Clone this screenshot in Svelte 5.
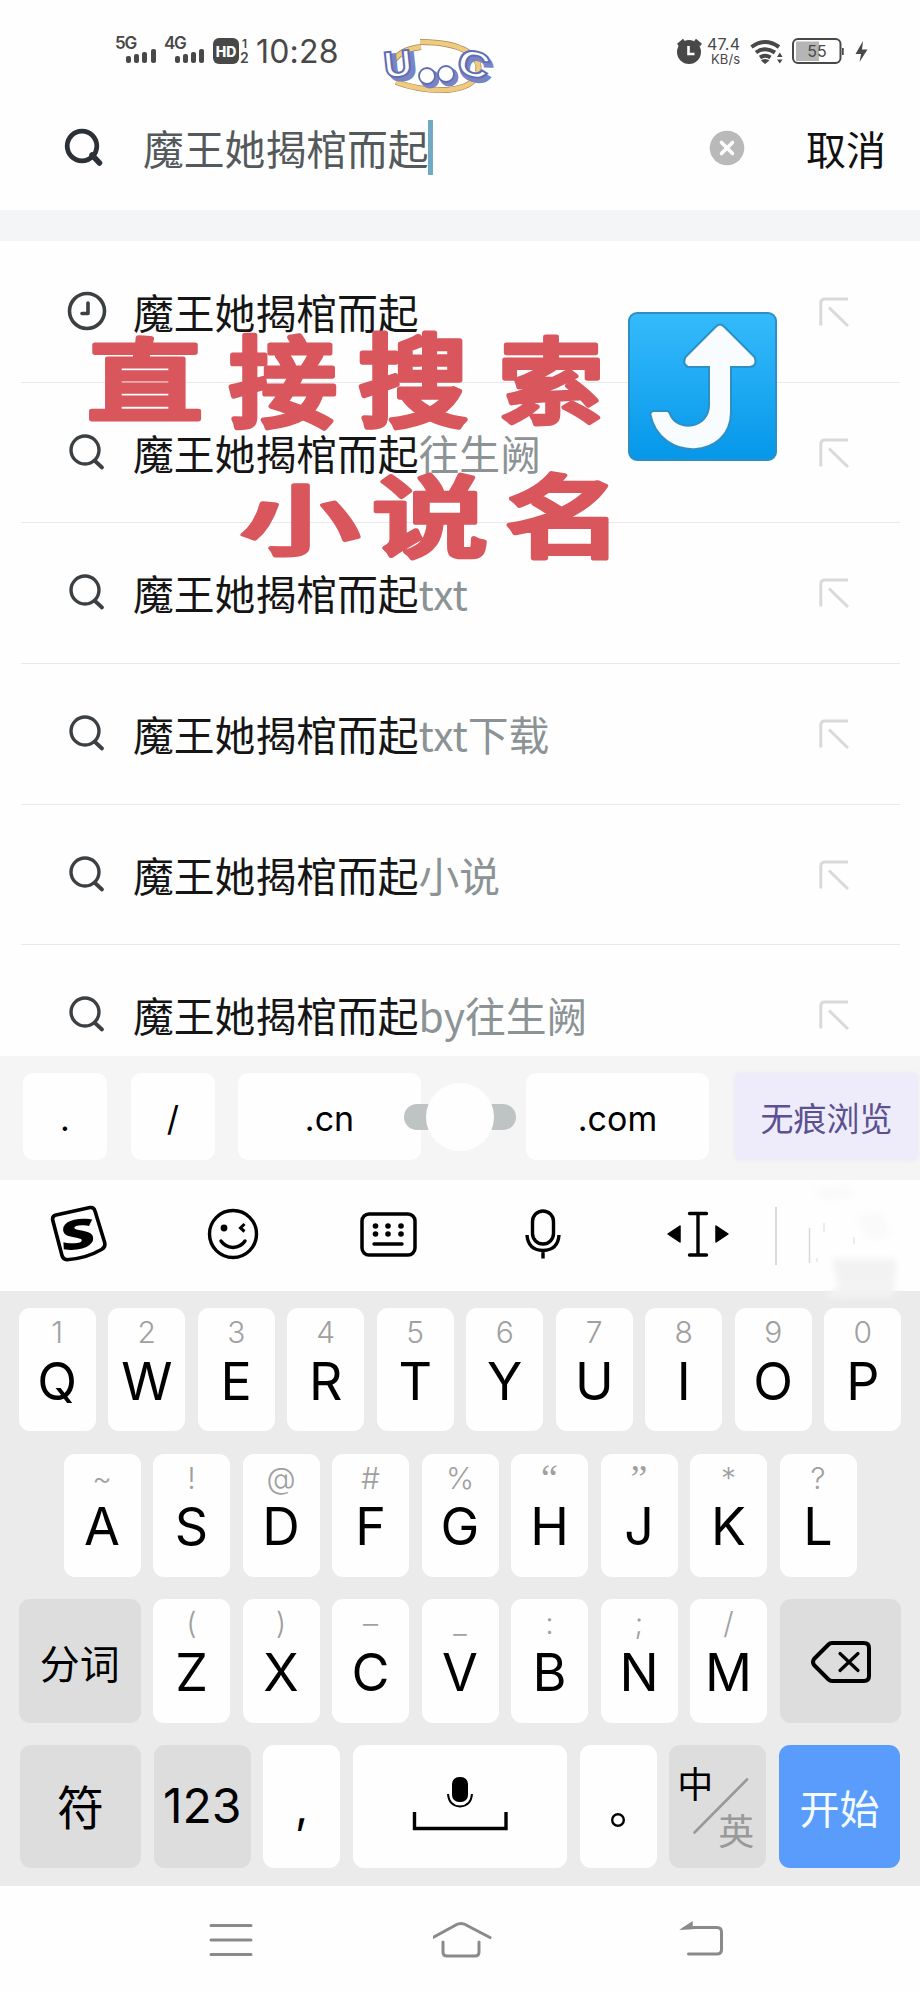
<!-- App.svelte - Browser search page with suggestions and the on-screen keyboard -->

<script lang="ts">
  type Key = { label: string; hint: string };

  const query = '魔王她揭棺而起';

  const suggestions = [
    { rest: '', recent: true },
    { rest: '往生阙', recent: false },
    { rest: 'txt', recent: false },
    { rest: 'txt下载', recent: false },
    { rest: '小说', recent: false },
    { rest: 'by往生阙', recent: false }
  ];

  function makeRow(letters: string, hints: string): Key[] {
    return letters.split('').map((label, i) => ({ label, hint: hints[i] }));
  }

  const topRow = makeRow('QWERTYUIOP', '1234567890');
  const midRow = makeRow('ASDFGHJKL', '~!@#%“”*?');
  const lowRow = makeRow('ZXCVBNM', '()–_:;/');

  // handwritten note: x/y is the glyph centre
  const note = [
    { ch: '直', x: 145, y: 380, sx: 1.22, sy: 0.95 },
    { ch: '接', x: 283, y: 382, sx: 1.14, sy: 1.04 },
    { ch: '搜', x: 413, y: 381, sx: 1.16, sy: 1.06 },
    { ch: '索', x: 551, y: 381, sx: 1.1, sy: 0.98 },
    { ch: '小', x: 300, y: 520, sx: 1.26, sy: 0.8 },
    { ch: '说', x: 430, y: 517, sx: 1.22, sy: 0.93 },
    { ch: '名', x: 564, y: 516, sx: 1.24, sy: 0.94 }
  ];
</script>

{#snippet letterKey(key: Key)}
  <button class="key">
    <span class="hint" class:quote={key.hint === '“' || key.hint === '”'}>{key.hint}</span>
    <span class="letter">{key.label}</span>
  </button>
{/snippet}

<div class="screen">
  <header>
    <div class="status">
      <svg class="signal" width="136" height="40" viewBox="114 32 136 40">
        <g fill="#484848">
          <text x="115" y="49" class="net">5G</text>
          <rect x="126" y="56" width="5" height="7" rx="2" />
          <rect x="134" y="54" width="5" height="9" rx="2" />
          <rect x="142" y="52" width="5" height="11" rx="2" />
          <rect x="151" y="49" width="5" height="14" rx="2" />
          <text x="164" y="49" class="net">4G</text>
          <rect x="175" y="56" width="5" height="7" rx="2" />
          <rect x="183" y="54" width="5" height="9" rx="2" />
          <rect x="191" y="52" width="5" height="11" rx="2" />
          <rect x="199" y="49" width="5" height="14" rx="2" />
          <rect x="213" y="38" width="26" height="26" rx="6" />
          <text x="226" y="57" class="hd">HD</text>
          <text x="242" y="48" class="sim">1</text>
          <text x="240" y="63" class="sim two">2</text>
        </g>
      </svg>
      <span class="clock">10:28</span>
      <svg class="logo" width="116" height="60" viewBox="380 36 116 60">
        <g fill="none" stroke="#a98360" stroke-width="6">
          <path d="M394 60 Q402 49 421 47" />
          <path d="M420 42 Q452 42 468 52 Q481 61 478 72" />
          <path d="M396 82 Q420 91 447 90 Q468 88 475 79" />
        </g>
        <g fill="none" stroke="#efcc7d" stroke-width="4.6">
          <path d="M394 60 Q402 49 421 47" />
          <path d="M420 42 Q452 42 468 52 Q481 61 478 72" />
          <path d="M396 82 Q420 91 447 90 Q468 88 475 79" />
        </g>
        <g class="logo-shade">
          <text transform="translate(389 81) rotate(-6) scale(1.12 1.06)">U</text>
          <text transform="translate(457 76) rotate(15) scale(1.28 1.04)">C</text>
          <circle cx="430" cy="79" r="8" />
          <circle cx="449" cy="77" r="8" />
        </g>
        <g class="logo-face">
          <text transform="translate(385 78) rotate(-6) scale(1.12 1.06)">U</text>
          <text transform="translate(455 72) rotate(15) scale(1.28 1.04)">C</text>
          <circle cx="427" cy="76" r="8" />
          <circle cx="446" cy="74" r="8" />
        </g>
      </svg>
      <svg class="sys" width="196" height="40" viewBox="674 32 196 40">
        <g fill="#484848">
          <circle cx="689" cy="52" r="12" />
          <path d="M678 45 l6-5 M701 45 l-6-5" stroke="#484848" stroke-width="3" />
          <path d="M688.500 46 v8 h6" fill="none" stroke="#fff" stroke-width="2.600" />
          <text x="707" y="50" class="speed" textLength="33">47.4</text>
          <text x="711" y="63.500" class="unit" textLength="29">KB/s</text>
          <g fill="none" stroke="#484848" stroke-width="4">
            <path d="M751.500 47 Q765 37 779 47" />
            <path d="M756 52.500 Q765 46 775 52.500" />
            <path d="M760 57.500 Q765 54 770.500 57.500" />
          </g>
          <path d="M761 60.500 Q765 57.500 769.500 60.500 L765 64z" />
          <path d="M777 57 l2.800-4.500 2.800 4.500z M777 59.500 l2.800 4 2.800-4z" />
          <rect x="796" y="41.500" width="23" height="19.500" fill="#b5b5b5" />
          <rect x="793" y="39" width="47.500" height="24" rx="5" fill="none" stroke="#484848" stroke-width="2" />
          <rect x="842" y="48" width="1.700" height="7" />
          <text x="817" y="57" class="battery">55</text>
          <path d="M863 41 L855.500 54 h5.500 L859.500 62 L867.500 49.500 h-5.500z" />
        </g>
      </svg>
    </div>

    <div class="search">
      <svg class="find" width="40" height="42" viewBox="64 127 40 42">
        <circle cx="82" cy="146" r="14.800" fill="none" stroke="#2b3136" stroke-width="4.800" />
        <path d="M92 155 L99.500 163" stroke="#2b3136" stroke-width="5.500" stroke-linecap="round" />
      </svg>
      <span class="query">{query}</span>
      <span class="caret"></span>
      <svg class="clear" width="36" height="36" viewBox="-18 -18 36 36">
        <circle r="17.300" fill="#b9b9b9" />
        <path d="M-5.500 -5.500 L5.500 5.500 M5.500 -5.500 L-5.500 5.500" stroke="#fff" stroke-width="3.600" stroke-linecap="round" />
      </svg>
      <span class="cancel">取消</span>
    </div>
  </header>

  <div class="strip"></div>

  <ul class="suggestions">
    {#each suggestions as item}
      <li>
        {#if item.recent}
          <svg class="lead" width="42" height="42" viewBox="-21 -20 42 42" fill="none" stroke="#3c4043">
            <circle cx="1" r="17.500" stroke-width="3.600" />
            <path d="M2 -8 V2.500 H-4" stroke-width="3.600" stroke-linecap="round" stroke-linejoin="round" />
          </svg>
        {:else}
          <svg class="lead" width="42" height="42" viewBox="-21 -20 42 42" fill="none" stroke="#3c4043">
            <circle cx="-1" cy="-2" r="14" stroke-width="3.400" />
            <path d="M8.500 8.500 L16 15.500" stroke-width="3.800" stroke-linecap="round" />
          </svg>
        {/if}
        <span class="text">{query}<em>{item.rest}</em></span>
        <svg class="fill" width="30" height="30" viewBox="0 0 30 30" fill="none" stroke="#d9d9d9" stroke-width="3">
          <path d="M1.800 28.500 V6 Q1.800 2 6 2 H29" />
          <path d="M10 10.500 L29 29" />
        </svg>
      </li>
    {/each}
  </ul>

  <div class="chips">
    <button class="chip small">.</button>
    <button class="chip small second">/</button>
    <button class="chip wide">.cn</button>
    <div class="slider"><i></i></div>
    <button class="chip wide">.com</button>
    <button class="chip wide private">无痕浏览</button>
  </div>

  <div class="toolbar">
    <div class="tool">
      <svg width="60" height="60" viewBox="47 1205 60 60">
        <path d="M55 1216 L89 1208.500 Q93 1208 94 1212 L103.500 1243 Q105 1248 100.500 1250.500 Q85 1259.500 66 1260.700 Q62 1260.500 61 1256.500 L51.700 1221 Q51 1217 55 1216z" fill="none" stroke="#000" stroke-width="3.600" />
        <text class="sogou" transform="translate(77.500 1250) rotate(-7) skewX(-4) scale(1.5 1.02)">S</text>
      </svg>
    </div>
    <div class="tool">
      <svg width="54" height="54" viewBox="-27 -27 54 54" fill="none" stroke="#000" stroke-width="3.400">
        <circle cy="0" r="23.500" />
        <circle cx="-9" cy="-6" r="3.400" fill="#000" stroke="none" />
        <path d="M11.500 -10 L7.500 -6 L11.500 -2.500" stroke-width="3" />
        <path d="M-12 7 Q-8 13 0 13.500 Q8 13 12 7" stroke-linecap="round" />
      </svg>
    </div>
    <div class="tool">
      <svg width="58" height="48" viewBox="-29 -24 58 48">
        <rect x="-26" y="-20" width="53" height="41" rx="7" fill="none" stroke="#000" stroke-width="3.500" />
        {#each [-12.5, 0, 13] as x}
          <circle cx={x} cy="-8" r="2.800" />
          <circle cx={x} cy="0" r="2.800" />
        {/each}
        <path d="M-14 10 H14" stroke="#000" stroke-width="3.400" stroke-linecap="round" />
      </svg>
    </div>
    <div class="tool">
      <svg width="38" height="54" viewBox="-19 -27 38 54" fill="none" stroke="#000" stroke-width="3.400">
        <rect x="-10.500" y="-23" width="21" height="33" rx="10.500" />
        <path d="M-16 1 Q-15 16 0 16.500 Q15 16 16 1 M0 16.500 V24.500" />
      </svg>
    </div>
    <div class="tool">
      <svg width="66" height="50" viewBox="-33 -25 66 50">
        <path d="M-8.500 -20.500 H8.500 M-8.500 21 H8.500 M0 -20.500 V21" stroke="#000" stroke-width="3.400" stroke-linecap="round" />
        <path d="M-30 0 L-18 -8 V8z M30 0 L18 -8 V8z" stroke="#000" stroke-width="1.500" stroke-linejoin="round" />
      </svg>
    </div>
    <div class="rule"></div>
    <svg class="smudge" width="130" height="122" viewBox="790 1180 130 122">
      <defs>
        <filter id="soft"><feGaussianBlur stdDeviation="3" /></filter>
      </defs>
      <g filter="url(#soft)">
        <path d="M832 1259 H896 V1276 L885 1286 L860 1278 L838 1284z" fill="#f2f2f2" />
        <path d="M848 1278 L895 1280 L893 1297 L824 1298z" fill="#f3f3f3" />
        <path d="M810 1190 L848 1185 L855 1196 L828 1202z" fill="#fafafa" />
        <path d="M855 1215 L882 1212 L892 1235 L868 1240z" fill="#fafafa" />
      </g>
      <path d="M809.500 1228 V1263" stroke="#d8d8d8" stroke-width="1.500" />
      <path d="M824 1223 V1232 M854 1237 V1244 M817 1258 V1262" stroke="#e6e6e6" stroke-width="1.500" />
    </svg>
  </div>

  <div class="keyboard">
    <div class="keys">
      {#each topRow as key}{@render letterKey(key)}{/each}
    </div>
    <div class="keys">
      {#each midRow as key}{@render letterKey(key)}{/each}
    </div>
    <div class="keys">
      <button class="key gray side split">分词</button>
      {#each lowRow as key}{@render letterKey(key)}{/each}
      <button class="key gray side">
        <svg width="64" height="46" viewBox="-33 -24 64 46" fill="none" stroke="#000" stroke-linecap="round" stroke-linejoin="round">
          <path d="M-9 -19 H23 Q28 -19 28 -14 V14 Q28 19 23 19 H-9 Q-11 19 -12.500 17.500 L-27 3 Q-29 0 -27 -3 L-12.500 -17.500 Q-11 -19 -9 -19z" stroke-width="4" />
          <path d="M-1 -8.500 L17 8.500 M17 -8.500 L-1 8.500" stroke-width="3.200" />
        </svg>
      </button>
    </div>
    <div class="keys">
      <button class="key gray side symbol">符</button>
      <button class="key gray mid num">123</button>
      <button class="key punct comma">,</button>
      <button class="key space">
        <svg width="100" height="60" viewBox="-50 0 100 60">
          <rect x="-8" y="4" width="16" height="25" rx="7" />
          <path d="M-12 21 Q-11 33 0 33.500 Q11 33 12 21" fill="none" stroke="#000" stroke-width="2" />
          <path d="M-45.500 39 V55.500 H46 V39" fill="none" stroke="#000" stroke-width="3.400" />
        </svg>
      </button>
      <button class="key punct">
        <svg width="16" height="16" viewBox="-8 -8 16 16">
          <circle r="5.800" fill="none" stroke="#000" stroke-width="2.400" />
        </svg>
      </button>
      <button class="key gray mid lang">
        <span class="zh">中</span>
        <svg width="56" height="56" viewBox="0 0 56 56">
          <path d="M1.500 54.500 L54 1.500" stroke="#999" stroke-width="2.600" stroke-linecap="round" />
        </svg>
        <span class="en">英</span>
      </button>
      <button class="key side go">开始</button>
    </div>
  </div>

  <nav>
    <svg width="60" height="44" viewBox="-30 -23 60 44">
      <path d="M-19 -14.500 H21 M-19 0 H21 M-19 14.500 H21" />
    </svg>
    <svg width="64" height="44" viewBox="-27 -23 64 44">
      <path d="M-27 -2.500 L-6 -14 Q1 -19 8 -14 L30 -2.500" />
      <path d="M-17 2 V12 Q-17 16 -13 16 H15 Q19 16 19 12 V2" />
    </svg>
    <svg width="64" height="44" viewBox="-40 -23 64 44" class="back">
      <path d="M-20 -12.500 H7 Q11.500 -12.500 11.500 -8 V9.500 Q11.500 14 7 14 H-21.500" />
      <path d="M-28 -11 L-18 -17.500 V-11.500z" class="tip" />
    </svg>
  </nav>

  <svg class="note" width="920" height="600" viewBox="0 0 920 600">
    {#each note as n}
      <text class="brush" transform="translate({n.x} {n.y}) scale({n.sx} {n.sy})" y="36">{n.ch}</text>
    {/each}
    <defs>
      <linearGradient id="sky" x1="0" y1="0" x2="0" y2="1">
        <stop offset="0" stop-color="#35bbfb" />
        <stop offset="1" stop-color="#0697ea" />
      </linearGradient>
    </defs>
    <rect x="629" y="313" width="147" height="147" rx="8" fill="url(#sky)" stroke="#2d8fc4" stroke-width="2" />
    <path
      d="M716 326.500 Q720 322.500 724 326.500 L754.500 357 Q758 366 750 367 H731 V412 C731 460 660 462 650.500 415 Q650 411 654 411 H667 Q669 411 670 414 C678 433 709 428 709 405 V367 H688 Q682 364 685.500 357z"
      fill="#f8fcfe"
      stroke="#2d8fc4"
      stroke-width="2"
    />
  </svg>
</div>

<style>
  :global(body) {
    background: #fefefe;
  }

  .screen {
    position: relative;
    width: 920px;
    height: 1992px;
    overflow: hidden;
    display: flex;
    flex-direction: column;
    background: #fefefe;
    font-family: Inter, 'Noto Sans CJK SC', sans-serif;
    color: #000;
  }

  svg {
    display: block;
    flex: none;
  }

  button {
    border: none;
    padding: 0;
    color: #000;
    font-family: inherit;
  }

  header {
    height: 210px;
    flex: none;
  }

  .status {
    display: flex;
    align-items: center;
    height: 64px;
    padding: 20px 50px 0 114px;
  }

  .net {
    font: 600 17px Inter, sans-serif;
    letter-spacing: -1.3px;
  }

  .hd {
    font: 800 14px Inter, sans-serif;
    fill: #fff;
    text-anchor: middle;
  }

  .sim {
    font: 600 12px Inter, sans-serif;
  }

  .two {
    font-size: 14px;
  }

  .clock {
    width: 90px;
    margin-left: 6px;
    font-size: 32px;
    line-height: 40px;
    color: #484848;
    letter-spacing: 0.2px;
  }

  .logo {
    align-self: flex-start;
    margin: 16px 178px 0 34px;
  }

  .logo text {
    font: 700 35px 'Liberation Sans', sans-serif;
  }

  .logo-shade {
    fill: #7884c4;
    stroke: #7884c4;
    stroke-width: 3;
  }

  .logo-face {
    fill: #fdfefd;
    stroke: #5f6eb4;
    stroke-width: 1.8;
  }

  .speed {
    font: 400 16px Inter, sans-serif;
  }

  .unit {
    font: 400 13px Inter, sans-serif;
  }

  .battery {
    font: 400 16px Inter, sans-serif;
    text-anchor: middle;
  }

  .search {
    display: flex;
    align-items: center;
    height: 127px;
    padding-left: 64px;
  }

  .find {
    margin-right: 39px;
  }

  .query {
    width: 285px;
    padding-top: 5px;
    font-size: 40.8px;
    line-height: 56px;
    color: #54595c;
    white-space: nowrap;
  }

  .caret {
    width: 5px;
    height: 55px;
    background: #6fa9c2;
  }

  .clear {
    margin-left: 276px;
  }

  .cancel {
    padding-top: 7px;
    margin-left: 61px;
    font-size: 40px;
    line-height: 56px;
    color: #111;
  }

  .strip {
    flex: none;
    height: 31px;
    background: #f4f5f6;
  }

  .suggestions {
    flex: none;
    box-sizing: border-box;
    height: 815px;
    margin: 0;
    padding: 1px 20px 0 21px;
    overflow: hidden;
    list-style: none;
  }

  .suggestions li {
    box-sizing: border-box;
    height: 140.7px;
    display: flex;
    align-items: center;
    padding: 0 51px 0 44px;
    border-bottom: 1.5px solid #e9e9e9;
  }

  .lead {
    margin-right: 26px;
  }

  .text {
    flex: 1;
    font-family: 'Noto Sans CJK SC', sans-serif;
    font-size: 40.8px;
    line-height: 60px;
    color: #151515;
    white-space: nowrap;
  }

  .text em {
    font-style: normal;
    color: #8c9395;
  }

  .chips {
    flex: none;
    box-sizing: border-box;
    display: flex;
    height: 124px;
    padding: 17px 0 0 23px;
    background: #f5f5f5;
  }

  .chip {
    height: 87px;
    flex: none;
    padding-top: 4px;
    border-radius: 10px;
    background: #fefefe;
    font-size: 34px;
  }

  .small {
    width: 84px;
  }

  .second {
    margin: 0 23px 0 24px;
  }

  .wide {
    width: 183px;
  }

  .private {
    margin-left: 26px;
    padding-top: 0;
    border-radius: 5px;
    background: #eeecfa;
    color: #5b5190;
    font-size: 33px;
    box-shadow: 0 0 5px #e9e8f0;
  }

  .slider {
    position: relative;
    flex: none;
    align-self: flex-start;
    width: 112px;
    height: 26px;
    margin: 31px 10px 0 -17px;
    border-radius: 13px;
    background: #bec4c3;
  }

  .slider i {
    position: absolute;
    left: 22px;
    top: -21px;
    width: 68px;
    height: 68px;
    border-radius: 50%;
    background: #fefefe;
  }

  .toolbar {
    flex: none;
    display: flex;
    align-items: center;
    height: 111px;
  }

  .tool {
    box-sizing: border-box;
    width: 155px;
    height: 111px;
    padding-bottom: 3px;
    display: flex;
    align-items: center;
    justify-content: center;
  }

  .sogou {
    font: 800 40px 'Open Sans', sans-serif;
    text-anchor: middle;
  }

  .rule {
    width: 2px;
    height: 58px;
    background: #dadada;
  }

  .smudge {
    position: relative;
    margin: 11px 0 0 13px;
  }

  .keyboard {
    flex: none;
    box-sizing: border-box;
    height: 595px;
    padding: 17px 18.7px 0;
    display: flex;
    flex-direction: column;
    gap: 22.5px;
    background: #ebebeb;
  }

  .keys {
    display: flex;
    justify-content: center;
    gap: 12.5px;
  }

  .key {
    box-sizing: border-box;
    width: 77px;
    height: 123.2px;
    flex: none;
    display: flex;
    flex-direction: column;
    align-items: center;
    border-radius: 11px;
    background: #fefefe;
  }

  .hint {
    margin-top: 9px;
    font-size: 30px;
    font-weight: 300;
    line-height: 30px;
    color: #a0a0a0;
  }

  .quote {
    font-family: 'Liberation Serif', serif;
    font-size: 38px;
    font-weight: 400;
  }

  .letter {
    margin-top: 8.5px;
    font-size: 52px;
    line-height: 52px;
  }

  .gray {
    background: #dddddd;
    justify-content: center;
  }

  .side {
    width: 121.5px;
    justify-content: center;
  }

  .mid {
    width: 97px;
  }

  .split {
    padding-top: 2px;
    font-size: 40px;
  }

  .symbol {
    padding-bottom: 5px;
    font-size: 47px;
  }

  .num {
    padding-bottom: 2px;
    font-size: 48px;
  }

  .space {
    width: 214.5px;
    padding-top: 28px;
  }

  .punct {
    padding-top: 67px;
  }

  .comma {
    padding-top: 33px;
    font-size: 46px;
    line-height: 56px;
  }

  .lang {
    display: grid;
    position: relative;
  }

  .lang svg {
    position: absolute;
    left: 24px;
    top: 33px;
  }

  .zh,
  .en {
    position: absolute;
    font-size: 36px;
    line-height: 40px;
  }

  .zh {
    left: 8px;
    top: 20px;
  }

  .en {
    right: 12px;
    bottom: 16px;
    color: #999;
  }

  .go {
    background: #5a9cfb;
    color: #f4fdff;
    font-size: 40px;
  }

  nav {
    flex: none;
    display: flex;
    height: 106px;
    align-items: center;
    justify-content: space-between;
    padding: 0 186px 0 200px;
  }

  nav path {
    fill: none;
    stroke: #8a8a8a;
    stroke-width: 3;
    stroke-linecap: round;
  }

  nav .tip {
    fill: #8a8a8a;
    stroke-width: 1.5;
  }

  .note {
    position: absolute;
    left: 0;
    top: 0;
  }

  .brush {
    font: 500 95px 'Noto Sans CJK SC', sans-serif;
    text-anchor: middle;
    fill: #d9565d;
    stroke: #d9565d;
    stroke-width: 5;
    stroke-linejoin: round;
  }
</style>
